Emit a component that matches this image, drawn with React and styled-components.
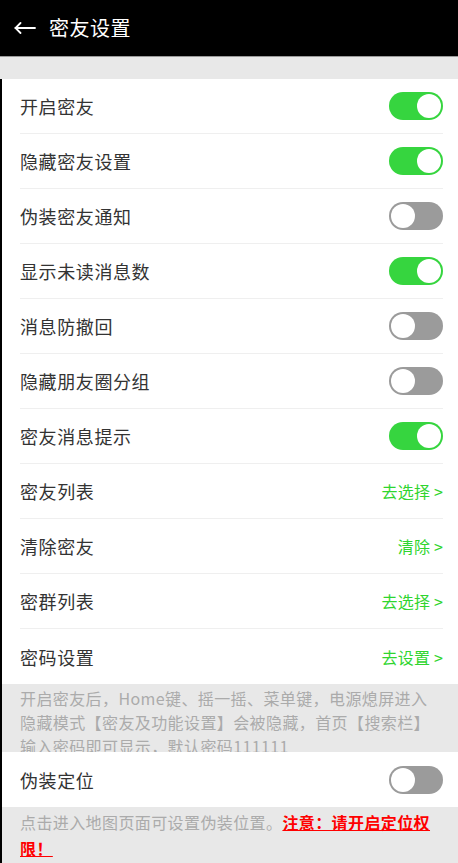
import React from 'react';
import styled, { createGlobalStyle } from 'styled-components';

const GlobalStyle = createGlobalStyle`
  html, body {
    margin: 0;
    padding: 0;
    background: #ffffff;
  }
  body {
    font-family: "Noto Sans CJK SC", "Noto Sans", sans-serif;
  }
`;

const Page = styled.div`
  width: 458px;
  height: 863px;
  overflow: hidden;
  background: #e8e8e8;
`;

const Header = styled.div`
  height: 56px;
  background: #000;
  border-bottom: 1px solid #9a9a9a;
  display: flex;
  align-items: center;
  padding-left: 14px;
  gap: 13px;
`;

const Title = styled.div`
  color: #fff;
  font-size: 20px;
  letter-spacing: 0.5px;
  line-height: 1;
`;

const TopGap = styled.div`
  height: 22px;
  background: #e8e8e8;
`;

const Body = styled.div`
  border-left: 2px solid #000;
`;

const List = styled.div`
  background: #fff;
`;

const Row = styled.div`
  height: 55px;
  padding-left: 18px;
  padding-right: 15px;
  display: flex;
`;

const RowInner = styled.div`
  flex: 1;
  display: flex;
  align-items: center;
  justify-content: space-between;
  border-bottom: ${(p) => (p.$last ? 'none' : '1px solid #efefef')};
`;

const Label = styled.span`
  font-size: 18px;
  letter-spacing: 0.6px;
  color: #333;
`;

const Link = styled.span`
  font-size: 16px;
  color: #2fd52f;
  letter-spacing: 0.2px;
`;

const Track = styled.div`
  width: 54px;
  height: 28px;
  border-radius: 14px;
  background: ${(p) => (p.$on ? '#36d53f' : '#9b9b9b')};
  display: flex;
  align-items: center;
  justify-content: ${(p) => (p.$on ? 'flex-end' : 'flex-start')};
  padding: 0 2px;
  box-sizing: border-box;
`;

const Knob = styled.div`
  width: 24px;
  height: 24px;
  border-radius: 50%;
  background: #fff;
`;

const Note = styled.div`
  padding: 2px 20px 0 18px;
  height: ${(p) => p.$height};
  overflow: hidden;
  box-sizing: border-box;
  font-size: 16px;
  line-height: ${(p) => p.$lh};
  letter-spacing: 0.4px;
  color: #ababab;
`;

const Warn = styled.span`
  color: #ff0000;
  font-weight: bold;
  text-decoration: underline;
`;

const Toggle = ({ on }) => (
  <Track $on={on}>
    <Knob />
  </Track>
);

const BackArrow = () => (
  <svg width="22" height="12" viewBox="0 0 22 12" fill="none" stroke="#fff" strokeWidth="1.8" strokeLinecap="round">
    <line x1="1.5" y1="6" x2="21" y2="6" />
    <polyline points="6.5,1 1.5,6 6.5,11" />
  </svg>
);

const rows = [
  { label: '开启密友', on: true },
  { label: '隐藏密友设置', on: true },
  { label: '伪装密友通知', on: false },
  { label: '显示未读消息数', on: true },
  { label: '消息防撤回', on: false },
  { label: '隐藏朋友圈分组', on: false },
  { label: '密友消息提示', on: true },
  { label: '密友列表', link: '去选择 >' },
  { label: '清除密友', link: '清除 >' },
  { label: '密群列表', link: '去选择 >' },
  { label: '密码设置', link: '去设置 >' },
];

const App = () => {
  return (
    <Page>
      <GlobalStyle />
      <Header>
        <BackArrow />
        <Title>密友设置</Title>
      </Header>
      <TopGap />
      <Body>
        <List>
          {rows.map((r, i) => (
            <Row key={r.label}>
              <RowInner $last={i === rows.length - 1}>
                <Label>{r.label}</Label>
                {r.link ? <Link>{r.link}</Link> : <Toggle on={r.on} />}
              </RowInner>
            </Row>
          ))}
        </List>
        <Note $height="68px" $lh="24px">
          开启密友后，Home键、摇一摇、菜单键，电源熄屏进入隐藏模式【密友及功能设置】会被隐藏，首页【搜索栏】输入密码即可显示，默认密码111111
        </Note>
        <List>
          <Row>
            <RowInner $last>
              <Label>伪装定位</Label>
              <Toggle on={false} />
            </RowInner>
          </Row>
        </List>
        <Note $height="60px" $lh="26px">
          点击进入地图页面可设置伪装位置。<Warn>注意：请开启定位权限！</Warn>
        </Note>
      </Body>
    </Page>
  );
};

export default App;
